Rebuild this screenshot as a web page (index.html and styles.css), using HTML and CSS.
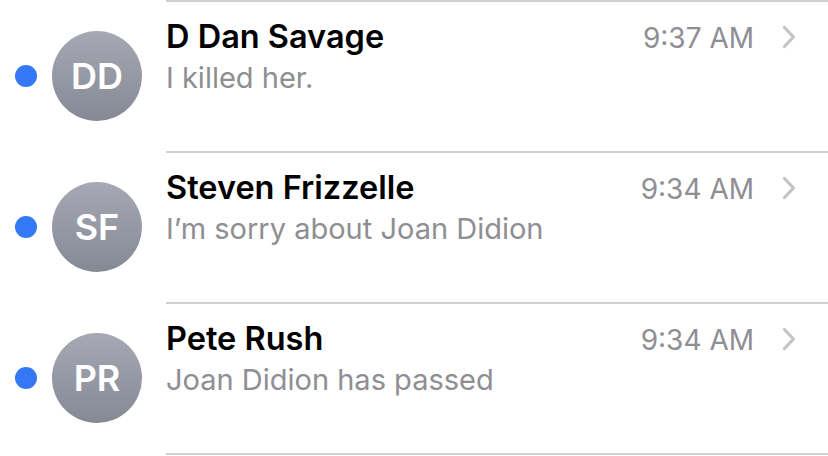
FILE: index.html
```html
<!DOCTYPE html>
<html>
<head>
<meta charset="utf-8">
<link rel="stylesheet" href="styles.css">
</head>
<body>
<div class="list">
  <div class="row">
    <div class="lead"><span class="dot"></span><span class="avatar">DD</span></div>
    <div class="main">
      <div class="top"><span class="name">D Dan Savage</span><span class="time">9:37 AM</span><svg class="chev" viewBox="0 0 14 24"><path d="M2.5 2.5 L11.5 12 L2.5 21.5" fill="none" stroke="#c4c4c7" stroke-width="3.2" stroke-linecap="round" stroke-linejoin="round"/></svg></div>
      <div class="preview">I killed her.</div>
    </div>
  </div>
  <div class="row">
    <div class="lead"><span class="dot"></span><span class="avatar">SF</span></div>
    <div class="main">
      <div class="top"><span class="name">Steven Frizzelle</span><span class="time">9:34 AM</span><svg class="chev" viewBox="0 0 14 24"><path d="M2.5 2.5 L11.5 12 L2.5 21.5" fill="none" stroke="#c4c4c7" stroke-width="3.2" stroke-linecap="round" stroke-linejoin="round"/></svg></div>
      <div class="preview">I’m sorry about Joan Didion</div>
    </div>
  </div>
  <div class="row">
    <div class="lead"><span class="dot"></span><span class="avatar">PR</span></div>
    <div class="main">
      <div class="top"><span class="name">Pete Rush</span><span class="time">9:34 AM</span><svg class="chev" viewBox="0 0 14 24"><path d="M2.5 2.5 L11.5 12 L2.5 21.5" fill="none" stroke="#c4c4c7" stroke-width="3.2" stroke-linecap="round" stroke-linejoin="round"/></svg></div>
      <div class="preview">Joan Didion has passed</div>
    </div>
  </div>
  <div class="end-sep"></div>
</div>
</body>
</html>
```
FILE: styles.css
```css
html, body {
  margin: 0;
  padding: 0;
  background: #ffffff;
}
body {
  font-family: Inter, "Noto Sans", "Liberation Sans", sans-serif;
  width: 828px;
  height: 456px;
  overflow: hidden;
}
.list {
  display: flex;
  flex-direction: column;
}
.row {
  display: flex;
  height: 151px;
}
.lead {
  width: 166px;
  display: flex;
  align-items: center;
  flex-shrink: 0;
}
.dot {
  width: 22px;
  height: 22px;
  border-radius: 50%;
  background: #3478f6;
  margin-left: 15px;
  margin-right: 15px;
}
.avatar {
  width: 90px;
  height: 90px;
  border-radius: 50%;
  background: linear-gradient(180deg, #a6a9b3 0%, #858994 100%);
  color: #ffffff;
  font-weight: 600;
  font-size: 36px;
  display: flex;
  align-items: center;
  justify-content: center;
}
.main {
  flex: 1;
  border-top: 2px solid #cfcfd2;
  padding-top: 16px;
  padding-right: 32px;
}
.top {
  display: flex;
  align-items: baseline;
  height: 38px;
}
.name {
  flex: 1;
  font-weight: 600;
  font-size: 32.5px;
  line-height: 38px;
  color: #000000;
}
.time {
  font-size: 28px;
  line-height: 38px;
  color: #8e8e93;
}
.chev {
  width: 14px;
  height: 24px;
  margin-left: 28px;
  align-self: center;
}
.preview {
  margin-top: 5px;
  font-size: 29px;
  line-height: 34px;
  color: #8e8e93;
}
.end-sep {
  margin-left: 166px;
  border-top: 2px solid #cfcfd2;
}
```
